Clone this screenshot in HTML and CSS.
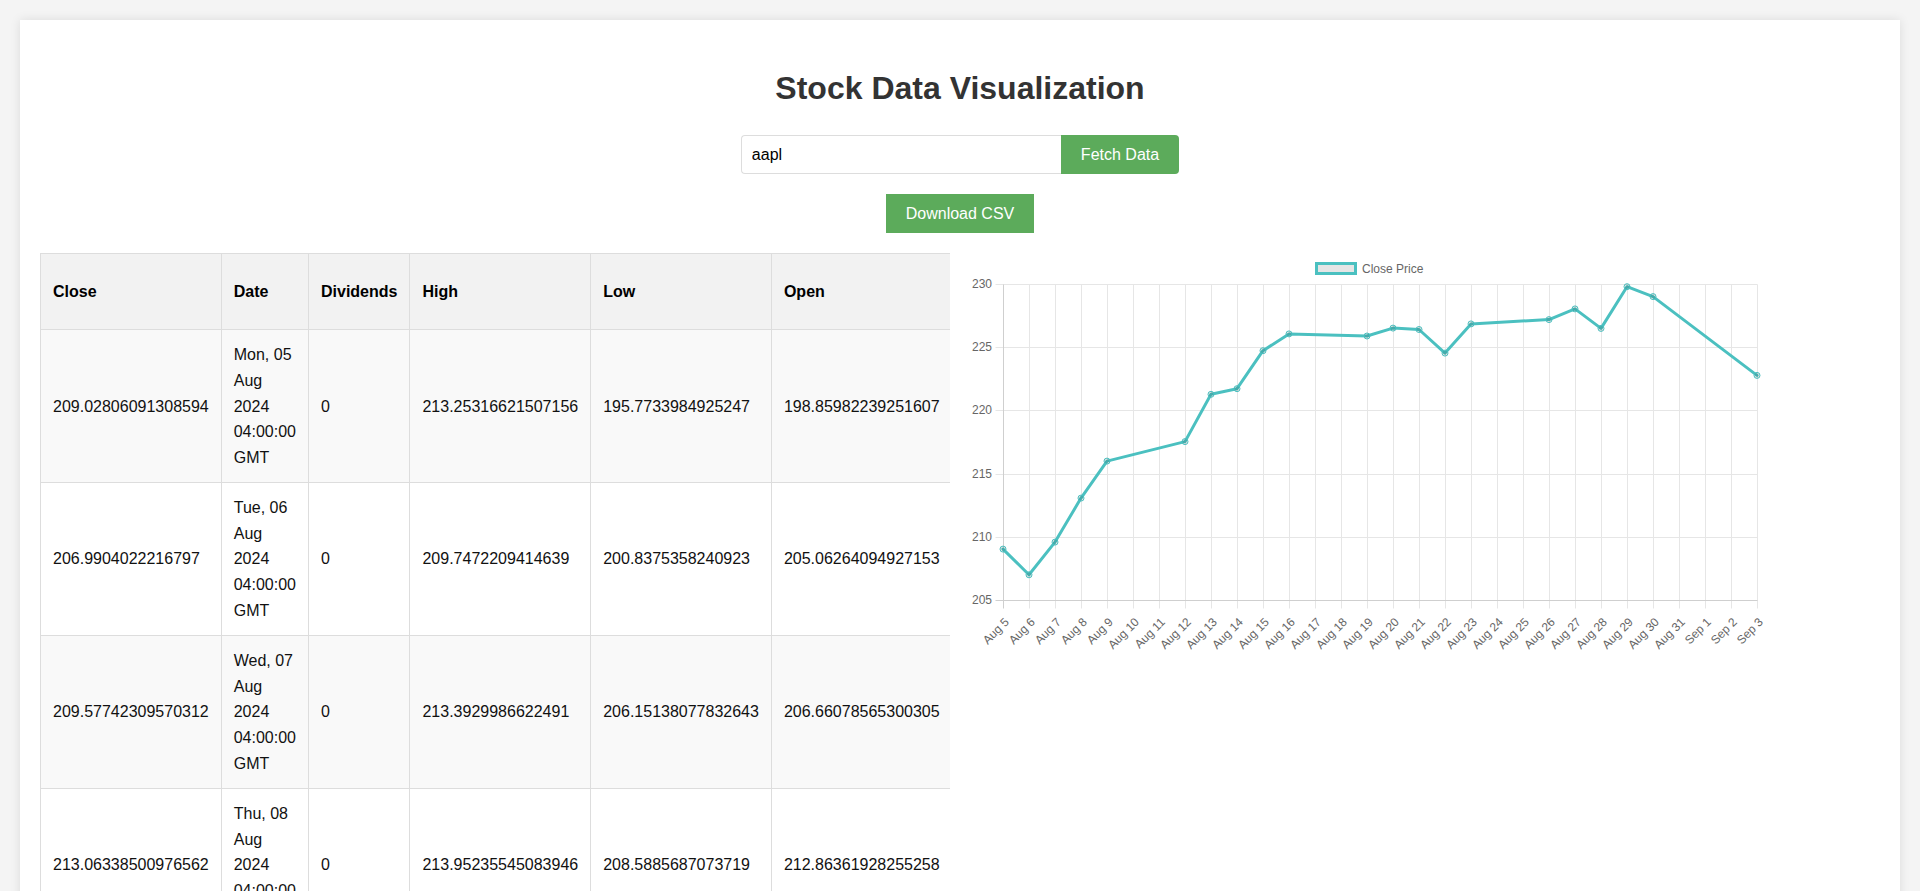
FILE: index.html
```html
<!DOCTYPE html>
<html lang="en">
<head>
<meta charset="utf-8">
<title>Stock Data Visualization</title>
<link rel="stylesheet" href="styles.css">
</head>
<body>
<div class="container">
  <h1>Stock Data Visualization</h1>
  <div class="input-group">
    <input type="text" class="ticker" value="aapl">
    <button class="btn btn-fetch">Fetch Data</button>
  </div>
  <button class="btn btn-download">Download CSV</button>
  <div class="content">
    <div class="table-wrap">
      <table>
        <tr>
          <th>Close</th><th>Date</th><th>Dividends</th><th>High</th><th>Low</th><th>Open</th><th>Stock Splits</th><th>Volume</th>
        </tr>
        <tr>
          <td>209.02806091308594</td><td>Mon, 05 Aug 2024 04:00:00 GMT</td><td>0</td><td>213.25316621507156</td><td>195.7733984925247</td><td>198.85982239251607</td><td>0</td><td>119548600</td>
        </tr>
        <tr>
          <td>206.9904022216797</td><td>Tue, 06 Aug 2024 04:00:00 GMT</td><td>0</td><td>209.7472209414639</td><td>200.8375358240923</td><td>205.06264094927153</td><td>0</td><td>69353300</td>
        </tr>
        <tr>
          <td>209.57742309570312</td><td>Wed, 07 Aug 2024 04:00:00 GMT</td><td>0</td><td>213.3929986622491</td><td>206.15138077832643</td><td>206.66078565300305</td><td>0</td><td>63516400</td>
        </tr>
        <tr>
          <td>213.06338500976562</td><td>Thu, 08 Aug 2024 04:00:00 GMT</td><td>0</td><td>213.95235545083946</td><td>208.5885687073719</td><td>212.86361928255258</td><td>0</td><td>47161100</td>
        </tr>
        <tr>
          <td>215.99053955078125</td><td>Fri, 09 Aug 2024 04:00:00 GMT</td><td>0</td><td>216.54913446049584</td><td>211.6218567630307</td><td>211.82160052716934</td><td>0</td><td>42201600</td>
        </tr>
        <tr>
          <td>217.52713012695312</td><td>Mon, 12 Aug 2024 04:00:00 GMT</td><td>0</td><td>219.26502390226128</td><td>215.14268829718214</td><td>215.90176329738838</td><td>0</td><td>38028100</td>
        </tr>
        <tr>
          <td>221.27218627929688</td><td>Tue, 13 Aug 2024 04:00:00 GMT</td><td>0</td><td>221.6517283930182</td><td>218.8954690815351</td><td>219.0053253527403</td><td>0</td><td>44155300</td>
        </tr>
      </table>
    </div>
    <div class="chart-wrap">
      <svg class="chart" width="800" height="400" viewBox="0 0 800 400">
        <g transform="translate(0.5,0.5)">
          <path class="grid" d="M59 31V355M85 31V355M111 31V355M137 31V355M163 31V355M189 31V355M215 31V355M241 31V355M267 31V355M293 31V355M319 31V355M345 31V355M371 31V355M397 31V355M423 31V355M449 31V355M475 31V355M501 31V355M527 31V355M553 31V355M579 31V355M605 31V355M631 31V355M657 31V355M683 31V355M709 31V355M735 31V355M761 31V355M787 31V355"/>
          <path class="grid" d="M25 31H787M25 94H787M25 157H787M25 221H787M25 284H787"/>
          <path class="axis" d="M33 31V355M25 347H787"/>
        </g>
        <g class="ylabels">
          <text x="22" y="31">230</text>
          <text x="22" y="94">225</text>
          <text x="22" y="157">220</text>
          <text x="22" y="221">215</text>
          <text x="22" y="284">210</text>
          <text x="22" y="347">205</text>
        </g>
        <g class="xlabels">
          <text transform="translate(37,367) rotate(-45)">Aug 5</text>
          <text transform="translate(63,367) rotate(-45)">Aug 6</text>
          <text transform="translate(89,367) rotate(-45)">Aug 7</text>
          <text transform="translate(115,367) rotate(-45)">Aug 8</text>
          <text transform="translate(141,367) rotate(-45)">Aug 9</text>
          <text transform="translate(167,367) rotate(-45)">Aug 10</text>
          <text transform="translate(193,367) rotate(-45)">Aug 11</text>
          <text transform="translate(219,367) rotate(-45)">Aug 12</text>
          <text transform="translate(245,367) rotate(-45)">Aug 13</text>
          <text transform="translate(271,367) rotate(-45)">Aug 14</text>
          <text transform="translate(297,367) rotate(-45)">Aug 15</text>
          <text transform="translate(323,367) rotate(-45)">Aug 16</text>
          <text transform="translate(349,367) rotate(-45)">Aug 17</text>
          <text transform="translate(375,367) rotate(-45)">Aug 18</text>
          <text transform="translate(401,367) rotate(-45)">Aug 19</text>
          <text transform="translate(427,367) rotate(-45)">Aug 20</text>
          <text transform="translate(453,367) rotate(-45)">Aug 21</text>
          <text transform="translate(479,367) rotate(-45)">Aug 22</text>
          <text transform="translate(505,367) rotate(-45)">Aug 23</text>
          <text transform="translate(531,367) rotate(-45)">Aug 24</text>
          <text transform="translate(557,367) rotate(-45)">Aug 25</text>
          <text transform="translate(583,367) rotate(-45)">Aug 26</text>
          <text transform="translate(609,367) rotate(-45)">Aug 27</text>
          <text transform="translate(635,367) rotate(-45)">Aug 28</text>
          <text transform="translate(661,367) rotate(-45)">Aug 29</text>
          <text transform="translate(687,367) rotate(-45)">Aug 30</text>
          <text transform="translate(713,367) rotate(-45)">Aug 31</text>
          <text transform="translate(739,367) rotate(-45)">Sep 1</text>
          <text transform="translate(765,367) rotate(-45)">Sep 2</text>
          <text transform="translate(791,367) rotate(-45)">Sep 3</text>
        </g>
        <g class="legend">
          <rect x="346.5" y="10.5" width="39" height="10"/>
          <text x="392" y="16">Close Price</text>
        </g>
        <polyline class="line" points="33,296.1 59,321.8 85,289.1 111,245.1 137,208.1 215,188.6 241,141.3 267,135.7 293,97.7 319,80.9 397,83 423,75.1 449,76.5 475,100.1 501,70.9 579,66.6 605,55.9 631,75.4 657,33.7 683,43.6 787,122.4"/>
        <g class="points">
          <circle cx="33" cy="296.1" r="3"/>
          <circle cx="59" cy="321.8" r="3"/>
          <circle cx="85" cy="289.1" r="3"/>
          <circle cx="111" cy="245.1" r="3"/>
          <circle cx="137" cy="208.1" r="3"/>
          <circle cx="215" cy="188.6" r="3"/>
          <circle cx="241" cy="141.3" r="3"/>
          <circle cx="267" cy="135.7" r="3"/>
          <circle cx="293" cy="97.7" r="3"/>
          <circle cx="319" cy="80.9" r="3"/>
          <circle cx="397" cy="83" r="3"/>
          <circle cx="423" cy="75.1" r="3"/>
          <circle cx="449" cy="76.5" r="3"/>
          <circle cx="475" cy="100.1" r="3"/>
          <circle cx="501" cy="70.9" r="3"/>
          <circle cx="579" cy="66.6" r="3"/>
          <circle cx="605" cy="55.9" r="3"/>
          <circle cx="631" cy="75.4" r="3"/>
          <circle cx="657" cy="33.7" r="3"/>
          <circle cx="683" cy="43.6" r="3"/>
          <circle cx="787" cy="122.4" r="3"/>
        </g>
      </svg>
    </div>
  </div>
</div>
</body>
</html>
```
FILE: styles.css
```css
html {
  scrollbar-width: none;
}
html::-webkit-scrollbar {
  display: none;
}
body {
  margin: 0;
  padding: 20px;
  background: #f4f4f4;
  font-family: "Liberation Sans", Arial, Helvetica, sans-serif;
  line-height: 1.6;
  color: #333;
}
.container {
  background: #fff;
  padding: 20px;
  box-shadow: 0 0 10px rgba(0, 0, 0, 0.1);
  text-align: center;
}
h1 {
  font-size: 32px;
  margin: 22.5px 0 21.44px;
  color: #333;
}
.input-group {
  display: flex;
  justify-content: center;
  margin-bottom: 20px;
}
.ticker {
  width: 320px;
  height: 39px;
  box-sizing: border-box;
  padding: 10px;
  font-family: "Liberation Sans", Arial, Helvetica, sans-serif;
  font-size: 16px;
  color: #000;
  border: 1px solid #ddd;
  border-right: none;
  border-radius: 4px 0 0 4px;
  outline: none;
}
.btn {
  height: 39px;
  box-sizing: border-box;
  padding: 0 20px;
  background: #5cab5b;
  color: #fff;
  border: none;
  font-family: "Liberation Sans", Arial, Helvetica, sans-serif;
  font-size: 16px;
}
.btn-fetch {
  border-radius: 0 4px 4px 0;
}
.btn-download {
  display: block;
  margin: 0 auto 20px;
  border-radius: 0;
}
.content {
  display: flex;
  gap: 20px;
  align-items: flex-start;
  text-align: left;
}
.table-wrap {
  flex: 1;
  min-width: 0;
  overflow-x: auto;
  scrollbar-width: none;
}
.table-wrap::-webkit-scrollbar {
  display: none;
}
table {
  border-collapse: collapse;
  font-size: 16px;
  color: #111;
}
th, td {
  border: 1px solid #ddd;
  text-align: left;
  padding: 12px;
}
th {
  background: #f2f2f2;
  font-weight: bold;
  color: #000;
}
tr:nth-child(even) {
  background: #f9f9f9;
}
.chart-wrap {
  flex: 1;
  min-width: 0;
}
.chart {
  display: block;
  font-family: "Liberation Sans", Arial, Helvetica, sans-serif;
}
.grid {
  stroke: #e6e6e6;
  stroke-width: 1;
  fill: none;
}
.axis {
  stroke: #cfcfcf;
  stroke-width: 1;
  fill: none;
}
.ylabels text {
  font-size: 12px;
  fill: #666;
  text-anchor: end;
  dominant-baseline: central;
}
.xlabels text {
  font-size: 12px;
  fill: #666;
  text-anchor: end;
  dominant-baseline: central;
}
.legend rect {
  fill: rgba(0, 0, 0, 0.1);
  stroke: rgb(75, 192, 192);
  stroke-width: 3;
}
.legend text {
  font-size: 12px;
  fill: #666;
  dominant-baseline: central;
}
.line {
  fill: none;
  stroke: rgb(75, 192, 192);
  stroke-width: 3;
  stroke-linejoin: round;
  stroke-linecap: round;
}
.points circle {
  fill: rgba(0, 0, 0, 0.1);
  stroke: rgb(75, 192, 192);
  stroke-width: 1;
}
```
